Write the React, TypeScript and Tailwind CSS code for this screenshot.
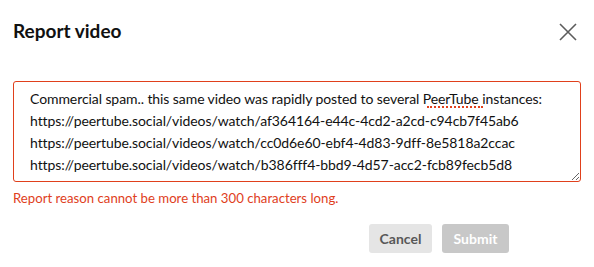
import React from 'react';

const reason = `Commercial spam.. this same video was rapidly posted to several PeerTube instances:
https://peertube.social/videos/watch/af364164-e44c-4cd2-a2cd-c94cb7f45ab6
https://peertube.social/videos/watch/cc0d6e60-ebf4-4d83-9dff-8e5818a2ccac
https://peertube.social/videos/watch/b386fff4-bbd9-4d57-acc2-fcb89fecb5d8`;

const App: React.FC = () => {
  return (
    <div className="w-[594px] h-[267px] bg-white font-['Lato','Liberation_Sans',sans-serif] text-black">
      <div className="flex items-center justify-between pl-[13px] pr-[17px] pt-[15px] h-[46px]">
        <h4 className="text-[19px] font-bold leading-none text-[#111]">Report video</h4>
        <button className="w-[18px] h-[18px] text-[#5c5c5c] mt-[2px]">
          <svg viewBox="0 0 18 18" width="18" height="18" fill="none" stroke="currentColor" strokeWidth="1.6">
            <path d="M1 1 L17 17 M17 1 L1 17" />
          </svg>
        </button>
      </div>

      <div className="px-[13px] pt-[35px]">
        <div className="relative">
          <textarea
            readOnly
            value={reason}
            spellCheck={false}
            className="block w-full h-[101px] resize-y rounded-[3px] border border-[#e0401c] pl-[16px] pr-[6px] pt-[6px] text-[14px] tracking-[-0.08px] leading-[22px] text-[#111] outline-none overflow-hidden whitespace-pre font-['Lato','Liberation_Sans',sans-serif]"
          />
          {/* spell-check squiggle under "PeerTube" */}
          <div className="absolute left-[414px] top-[25px] w-[56px] border-b-2 border-dotted border-[#e0401c] pointer-events-none" />
        </div>
        <div className="mt-[7px] text-[13.2px] text-[#e0401c]">Report reason cannot be more than 300 characters long.</div>
      </div>

      <div className="flex justify-end gap-[10px] pr-[85px] pt-[15px]">
        <button className="h-[29px] w-[63px] rounded-[3px] bg-[#e5e5e5] text-[#585858] font-bold text-[14px]">Cancel</button>
        <button className="h-[29px] w-[67px] rounded-[3px] bg-[#c8c8c8] text-white font-bold text-[14px]">Submit</button>
      </div>
    </div>
  );
};

export default App;
